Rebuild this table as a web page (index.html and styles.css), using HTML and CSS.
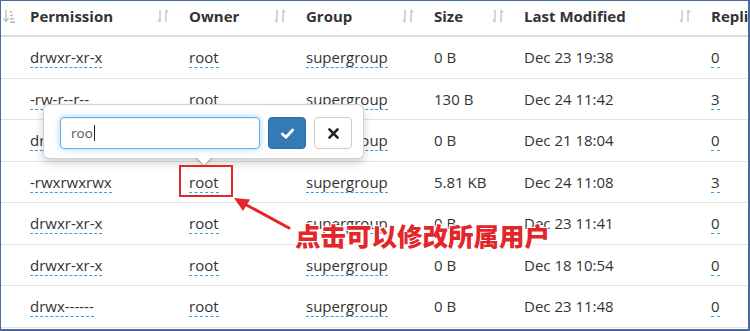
FILE: index.html
```html
<!DOCTYPE html>
<html>
<head>
<meta charset="utf-8">
<link rel="stylesheet" href="styles.css">
</head>
<body>
<div class="frame">
  <table class="grid">
    <colgroup>
      <col class="c0"><col class="c1"><col class="c2"><col class="c3"><col class="c4"><col class="c5"><col class="c6">
    </colgroup>
    <thead>
      <tr>
        <th class="first"><svg class="sort-amt" viewBox="0 0 12 14" width="12" height="14"><path d="M3 1v11M0.5 9.5L3 12.5L5.5 9.5" fill="none" stroke="#bbb" stroke-width="1.4"/><rect x="7" y="2" width="2" height="1.6" fill="#bbb"/><rect x="7" y="5.5" width="3" height="1.6" fill="#bbb"/><rect x="7" y="9" width="4" height="1.6" fill="#bbb"/><rect x="7" y="12.4" width="5" height="1.6" fill="#bbb"/></svg></th>
        <th>Permission<svg class="sort" viewBox="0 0 12 14" width="12" height="14"><path d="M3 1v12M0.8 10.5L3 13" fill="none" stroke="#ccc" stroke-width="1.6"/><path d="M9 13V1M11.2 3.5L9 1" fill="none" stroke="#ccc" stroke-width="1.6"/></svg></th>
        <th>Owner<svg class="sort" viewBox="0 0 12 14" width="12" height="14"><path d="M3 1v12M0.8 10.5L3 13" fill="none" stroke="#ccc" stroke-width="1.6"/><path d="M9 13V1M11.2 3.5L9 1" fill="none" stroke="#ccc" stroke-width="1.6"/></svg></th>
        <th>Group<svg class="sort" viewBox="0 0 12 14" width="12" height="14"><path d="M3 1v12M0.8 10.5L3 13" fill="none" stroke="#ccc" stroke-width="1.6"/><path d="M9 13V1M11.2 3.5L9 1" fill="none" stroke="#ccc" stroke-width="1.6"/></svg></th>
        <th>Size<svg class="sort" viewBox="0 0 12 14" width="12" height="14"><path d="M3 1v12M0.8 10.5L3 13" fill="none" stroke="#ccc" stroke-width="1.6"/><path d="M9 13V1M11.2 3.5L9 1" fill="none" stroke="#ccc" stroke-width="1.6"/></svg></th>
        <th>Last Modified<svg class="sort" viewBox="0 0 12 14" width="12" height="14"><path d="M3 1v12M0.8 10.5L3 13" fill="none" stroke="#ccc" stroke-width="1.6"/><path d="M9 13V1M11.2 3.5L9 1" fill="none" stroke="#ccc" stroke-width="1.6"/></svg></th>
        <th>Replication</th>
      </tr>
    </thead>
    <tbody>
      <tr><td></td><td><span class="ed">drwxr-xr-x</span></td><td><span class="ed">root</span></td><td><span class="ed">supergroup</span></td><td>0 B</td><td>Dec 23 19:38</td><td><span class="ed">0</span></td></tr>
      <tr><td></td><td><span class="ed">-rw-r--r--</span></td><td><span class="ed">root</span></td><td><span class="ed">supergroup</span></td><td>130 B</td><td>Dec 24 11:42</td><td><span class="ed">3</span></td></tr>
      <tr><td></td><td><span class="ed">drwxr-xr-x</span></td><td><span class="ed">root</span></td><td><span class="ed">supergroup</span></td><td>0 B</td><td>Dec 21 18:04</td><td><span class="ed">0</span></td></tr>
      <tr><td></td><td><span class="ed">-rwxrwxrwx</span></td><td><span class="ed">root</span></td><td><span class="ed">supergroup</span></td><td>5.81 KB</td><td>Dec 24 11:08</td><td><span class="ed">3</span></td></tr>
      <tr><td></td><td><span class="ed">drwxr-xr-x</span></td><td><span class="ed">root</span></td><td><span class="ed">supergroup</span></td><td>0 B</td><td>Dec 23 11:41</td><td><span class="ed">0</span></td></tr>
      <tr><td></td><td><span class="ed">drwxr-xr-x</span></td><td><span class="ed">root</span></td><td><span class="ed">supergroup</span></td><td>0 B</td><td>Dec 18 10:54</td><td><span class="ed">0</span></td></tr>
      <tr class="last"><td></td><td><span class="ed">drwx------</span></td><td><span class="ed">root</span></td><td><span class="ed">supergroup</span></td><td>0 B</td><td>Dec 23 11:48</td><td><span class="ed">0</span></td></tr>
    </tbody>
  </table>

  <div class="popover">
    <div class="pop-inner">
      <div class="pop-input">roo<span class="caret"></span></div>
      <button class="btn btn-ok"><svg viewBox="0 0 16 16" width="15" height="15"><path d="M2.5 8.5L6.3 12L13.5 4.2" fill="none" stroke="#fff" stroke-width="3" stroke-linecap="round" stroke-linejoin="round"/></svg></button>
      <button class="btn btn-cancel"><svg viewBox="0 0 16 16" width="13" height="13"><path d="M3 3L13 13M13 3L3 13" fill="none" stroke="#222" stroke-width="3.2" stroke-linecap="round"/></svg></button>
    </div>
    <span class="pop-arrow"></span>
  </div>

  <div class="mark-box"></div>
  <svg class="mark-arrow" viewBox="0 0 70 40" width="70" height="40"><path d="M58 32L10 6" stroke="#e3262a" stroke-width="3" stroke-linecap="round" fill="none"/><path d="M3 2L19 3.5L12 15Z" fill="#e3262a"/></svg>
  <div class="mark-text">点击可以修改所属用户</div>
</div>
</body>
</html>
```
FILE: styles.css
```css
html, body {
  margin: 0;
  padding: 0;
  background: #fff;
}
.frame {
  position: relative;
  width: 750px;
  height: 331px;
  box-sizing: border-box;
  border: 1px solid #4a6a9e;
  border-right-width: 2px;
  border-bottom-width: 2px;
  overflow: hidden;
  font-family: "Open Sans", "Noto Sans", sans-serif;
  font-size: 15px;
  color: #333;
}
.grid {
  border-collapse: collapse;
  table-layout: fixed;
  width: 860px;
  margin-left: -1px;
}
.c0 { width: 22px; }
.c1 { width: 159px; }
.c2 { width: 117px; }
.c3 { width: 128px; }
.c4 { width: 90px; }
.c5 { width: 187px; }
.c6 { width: 157px; }
.grid th {
  position: relative;
  height: 30px;
  padding: 0 8px 4px;
  text-align: left;
  font-weight: 700;
  white-space: nowrap;
  border-bottom: 2px solid #ddd;
  vertical-align: middle;
}
.grid th.first { padding: 0; }
.sort {
  position: absolute;
  right: 12px;
  top: 8px;
}
.sort-amt {
  position: absolute;
  left: 3px;
  top: 8px;
}
.grid td {
  height: 40.5px;
  padding: 0 8px;
  border-bottom: 1px solid #e2e2e2;
  white-space: nowrap;
  vertical-align: middle;
}
.grid tr.last td { border-bottom-color: #f1dede; }
.ed {
  border-bottom: 1px dashed #3a9fd6;
}

/* popover */
.popover {
  position: absolute;
  left: 42px;
  top: 103px;
  width: 321px;
  height: 55px;
  box-sizing: border-box;
  background: #fff;
  border: 1px solid rgba(0,0,0,0.18);
  border-radius: 6px;
  box-shadow: 0 4px 10px rgba(0,0,0,0.18);
}
.pop-inner {
  display: flex;
  align-items: center;
  gap: 8px;
  padding: 12px 0 0 16px;
}
.pop-input {
  width: 200px;
  height: 32px;
  box-sizing: border-box;
  border: 1px solid #66afe9;
  border-radius: 4px;
  box-shadow: inset 0 1px 1px rgba(0,0,0,.075), 0 0 6px rgba(102,175,233,.6);
  padding: 0 10px;
  font-size: 13.5px;
  line-height: 30px;
  color: #555;
  display: flex;
  align-items: center;
}
.caret {
  display: inline-block;
  width: 1px;
  height: 16px;
  background: #222;
  margin-left: 1px;
}
.btn {
  width: 38px;
  height: 32px;
  box-sizing: border-box;
  border-radius: 4px;
  padding: 0;
  display: flex;
  align-items: center;
  justify-content: center;
  margin: 0;
}
.btn-ok {
  background: #337ab7;
  border: 1px solid #2e6da4;
}
.btn-cancel {
  background: #fff;
  border: 1px solid #ccc;
}
.pop-arrow {
  position: absolute;
  left: 151px;
  bottom: -9px;
  width: 0;
  height: 0;
  border-left: 9px solid transparent;
  border-right: 9px solid transparent;
  border-top: 9px solid rgba(0,0,0,0.2);
}
.pop-arrow::after {
  content: "";
  position: absolute;
  left: -8px;
  top: -10px;
  border-left: 8px solid transparent;
  border-right: 8px solid transparent;
  border-top: 8px solid #fff;
}

/* annotations */
.mark-box {
  position: absolute;
  left: 178px;
  top: 164px;
  width: 54px;
  height: 32px;
  box-sizing: border-box;
  border: 2px solid #e3262a;
}
.mark-arrow {
  position: absolute;
  left: 230px;
  top: 195px;
}
.mark-text {
  position: absolute;
  left: 294px;
  top: 217px;
  font-family: "Noto Sans CJK SC", sans-serif;
  font-weight: 900;
  font-size: 25.5px;
  line-height: 34px;
  color: #e3262a;
  letter-spacing: 0;
  text-shadow: 0 0 2px #fff, 1px 1px 0 #fff, -1px -1px 0 #fff, 1px -1px 0 #fff, -1px 1px 0 #fff;
}
```
